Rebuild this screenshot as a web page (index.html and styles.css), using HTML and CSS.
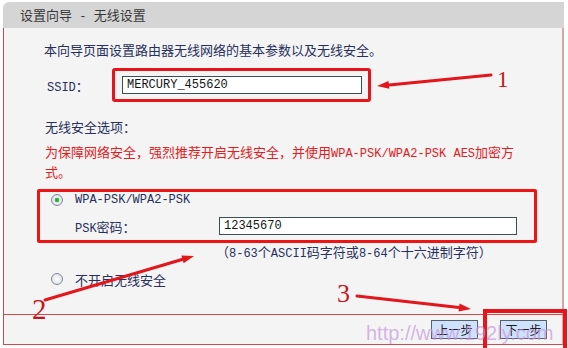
FILE: index.html
```html
<!DOCTYPE html>
<html lang="zh-CN">
<head>
<meta charset="utf-8">
<title>设置向导 - 无线设置</title>
<link rel="stylesheet" href="styles.css">
</head>
<body>
<div class="page">
  <div class="panel">
    <div class="head">设置向导<span class="en sep"> - </span>无线设置</div>
    <div class="body">
      <p class="intro">本向导页面设置路由器无线网络的基本参数以及无线安全。</p>
      <div class="ssid">
        <label class="lbl"><span class="en">SSID</span>：</label>
        <span class="hl"><span class="input">MERCURY_455620</span></span>
      </div>
      <p class="sect">无线安全选项：</p>
      <p class="warn">为保障网络安全，强烈推荐开启无线安全，并使用<span class="en">WPA-PSK/WPA2-PSK AES</span>加密方式。</p>
      <div class="opts">
        <div class="radio-row">
          <span class="radio on"></span>
          <span class="en">WPA-PSK/WPA2-PSK</span>
        </div>
        <div class="psk-row">
          <label class="psk-lbl"><span class="en">PSK</span>密码：</label>
          <span class="input psk">12345670</span>
        </div>
      </div>
      <p class="hint">（<span class="en">8-63</span>个<span class="en">ASCII</span>码字符或<span class="en">8-64</span>个十六进制字符）</p>
      <div class="radio-row off-row">
        <span class="radio"></span>
        <span>不开启无线安全</span>
      </div>
    </div>
    <div class="foot">
      <button class="btn">上一步</button>
      <button class="btn">下一步</button>
    </div>
  </div>

  <svg class="arrows" width="568" height="348" viewBox="0 0 568 348">
    <g stroke="#e3161c" stroke-width="3" stroke-linecap="round" fill="none">
      <line x1="491" y1="75" x2="389" y2="85"/>
      <line x1="45" y1="300" x2="182" y2="259.5"/>
      <line x1="357" y1="296" x2="459" y2="307.6"/>
    </g>
    <g fill="#e3161c">
      <polygon points="377,86 389.3,88.8 388.5,80.9"/>
      <polygon points="194,256 183.6,263.2 181.4,255.6"/>
      <polygon points="471,309 458.6,311.6 459.5,303.6"/>
    </g>
  </svg>
  <span class="num n1">1</span>
  <span class="num n2">2</span>
  <span class="num n3">3</span>
  <span class="hl3"></span>
  <span class="wm">http://www.192ly.com</span>
</div>
</body>
</html>
```
FILE: styles.css
```css
html, body {
  margin: 0;
  background: #ffffff;
}

body {
  font-family: "Noto Sans CJK SC", sans-serif;
  font-size: 13px;
  color: #27305c;
}

.en {
  font-family: "Liberation Mono", monospace;
  font-size: 12px;
  line-height: 1;
}

.sep {
  white-space: pre;
}

.page {
  position: relative;
  width: 568px;
  height: 348px;
  padding-top: 2px;
  box-sizing: border-box;
  overflow: hidden;
}

.panel {
  margin-left: 3px;
  width: 561px;
}

.head {
  height: 26px;
  line-height: 26px;
  background: #d5d5d5;
  border-top-left-radius: 6px;
  padding-left: 17px;
  color: #383838;
}

.body {
  box-sizing: border-box;
  height: 287px;
  background: #f4f4f4;
  border-left: 1px solid #c84a4a;
  border-right: 2px solid #d6a6a6;
  border-bottom: 1px solid #d24a4a;
  padding-top: 12px;
}

.intro {
  margin: 0;
  padding-left: 40px;
  line-height: 20px;
}

.ssid {
  display: flex;
  align-items: center;
  height: 34px;
  margin-top: 8px;
  padding-left: 43px;
}

.lbl {
  width: 65px;
}

.hl {
  border: 3px solid #e8141c;
  border-radius: 3px;
  padding: 5px 6px 5px 7px;
}

.input {
  display: block;
  box-sizing: border-box;
  width: 240px;
  height: 18px;
  border: 1px solid #3b4f50;
  background: #ffffff;
  padding-left: 4px;
  font-family: "Liberation Mono", monospace;
  font-size: 12px;
  line-height: 16px;
  color: #151515;
}

.sect {
  margin: 15px 0 0;
  padding-left: 41px;
  line-height: 20px;
}

.warn {
  margin: 5px 0 0;
  padding-left: 41px;
  width: 478px;
  line-height: 20px;
  color: #e2201e;
}

.opts {
  box-sizing: border-box;
  width: 500px;
  height: 54px;
  margin: 7px 0 0 33px;
  border: 3px solid #ee1414;
  border-radius: 2px;
}

.radio-row {
  display: flex;
  align-items: center;
  gap: 12px;
  height: 16px;
  padding-left: 11px;
}

.radio {
  flex: none;
  box-sizing: border-box;
  width: 12px;
  height: 12px;
  border-radius: 50%;
  border: 1px solid #7b8a9c;
  background: radial-gradient(circle, #ffffff 0, #e6eaef 60%, #cfd6de 100%);
}

.radio.on {
  background: radial-gradient(circle, #2fa046 0, #3bb04f 2px, #e9efe9 2.6px, #d5dbe2 100%);
}

.psk-row {
  display: flex;
  align-items: center;
  height: 18px;
  margin-top: 9px;
  padding-left: 35px;
}

.psk-lbl {
  width: 144px;
}

.psk {
  width: 298px;
}

.hint {
  margin: 0;
  padding-left: 212px;
  height: 18px;
  line-height: 18px;
}

.off-row {
  height: 18px;
  margin-top: 9px;
  padding-left: 47px;
}

.foot {
  box-sizing: border-box;
  height: 30px;
  display: flex;
  justify-content: flex-end;
  align-items: flex-start;
  gap: 22px;
  padding: 5px 15px 0 0;
  background: #f4f4f4;
  border-left: 1px solid #c84a4a;
  border-right: 2px solid #d6a6a6;
  border-bottom: 1px solid #d24a4a;
}

.btn {
  width: 47px;
  height: 19px;
  padding: 0;
  background: #cfe2fb;
  border: 1px solid #56606e;
  font-family: "Noto Sans CJK SC", sans-serif;
  font-size: 12px;
  line-height: 17px;
  color: #1f1f1f;
}

.arrows {
  position: absolute;
  left: 0;
  top: 0;
  pointer-events: none;
}

.num {
  position: absolute;
  font-family: "Liberation Serif", serif;
  line-height: 1;
  color: #c4161c;
}

.n1 {
  left: 497px;
  top: 68px;
  font-size: 23px;
}

.n2 {
  left: 32px;
  top: 295px;
  font-size: 29px;
}

.n3 {
  left: 337px;
  top: 281px;
  font-size: 26px;
}

.hl3 {
  position: absolute;
  left: 483px;
  top: 309px;
  width: 76px;
  height: 36px;
  border: 4px solid #e8141c;
}

.wm {
  position: absolute;
  left: 366px;
  top: 321px;
  font-family: "Liberation Sans", sans-serif;
  font-size: 20px;
  line-height: 24px;
  color: rgba(196, 150, 220, 0.7);
  pointer-events: none;
}
```
